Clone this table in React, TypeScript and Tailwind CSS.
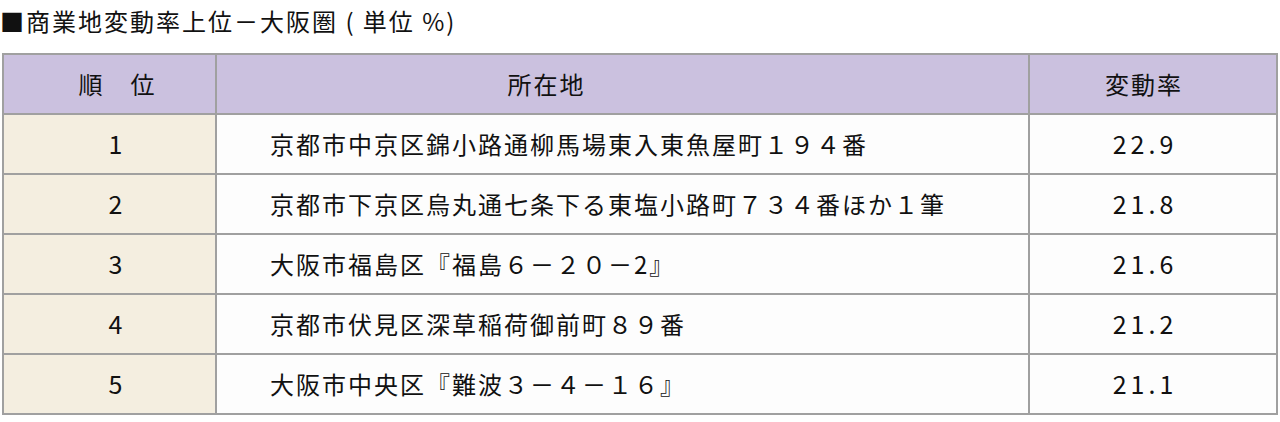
import React from "react";

const rows = [
  { rank: "1", addr: "京都市中京区錦小路通柳馬場東入東魚屋町１９４番", val: "22.9" },
  { rank: "2", addr: "京都市下京区烏丸通七条下る東塩小路町７３４番ほか１筆", val: "21.8" },
  { rank: "3", addr: "大阪市福島区『福島６－２０－2』", val: "21.6" },
  { rank: "4", addr: "京都市伏見区深草稲荷御前町８９番", val: "21.2" },
  { rank: "5", addr: "大阪市中央区『難波３－４－１６』", val: "21.1" },
];

export default function App() {
  return (
    <div
      className="w-[1280px] h-[422px] bg-white text-[#111] overflow-hidden"
      style={{ fontFamily: '"Noto Sans CJK JP", "Noto Sans", sans-serif' }}
    >
      <div className="h-[53px] pt-[6px] text-[24px] leading-[30px] tracking-[2px] whitespace-nowrap">
        ■商業地変動率上位－大阪圏 ( 単位 %)
      </div>
      <table className="ml-[2px] w-[1276px] table-fixed border-collapse border-2 border-[#a0a0a0] text-[24px] tracking-[2px]">
        <colgroup>
          <col className="w-[213px]" />
          <col className="w-[813px]" />
          <col />
        </colgroup>
        <thead>
          <tr className="h-[60px] bg-[#cbc1df]">
            <th className="border-2 border-[#a0a0a0] font-normal text-center pl-[16px]">順　位</th>
            <th className="border-2 border-[#a0a0a0] font-normal text-center pr-[152px]">所在地</th>
            <th className="border-2 border-[#a0a0a0] font-normal text-center pr-[18px]">変動率</th>
          </tr>
        </thead>
        <tbody>
          {rows.map((r) => (
            <tr key={r.rank} className="h-[60px]">
              <td className="border-2 border-[#a0a0a0] bg-[#f4eee0] text-center pl-[16px] text-[25px] tracking-[4px]">{r.rank}</td>
              <td className="border-2 border-[#a0a0a0] bg-[#fdfdfd] pl-[53px] whitespace-nowrap">{r.addr}</td>
              <td className="border-2 border-[#a0a0a0] bg-[#fdfdfd] text-center pr-[16px] text-[25px] tracking-[4px]">{r.val}</td>
            </tr>
          ))}
        </tbody>
      </table>
    </div>
  );
}
